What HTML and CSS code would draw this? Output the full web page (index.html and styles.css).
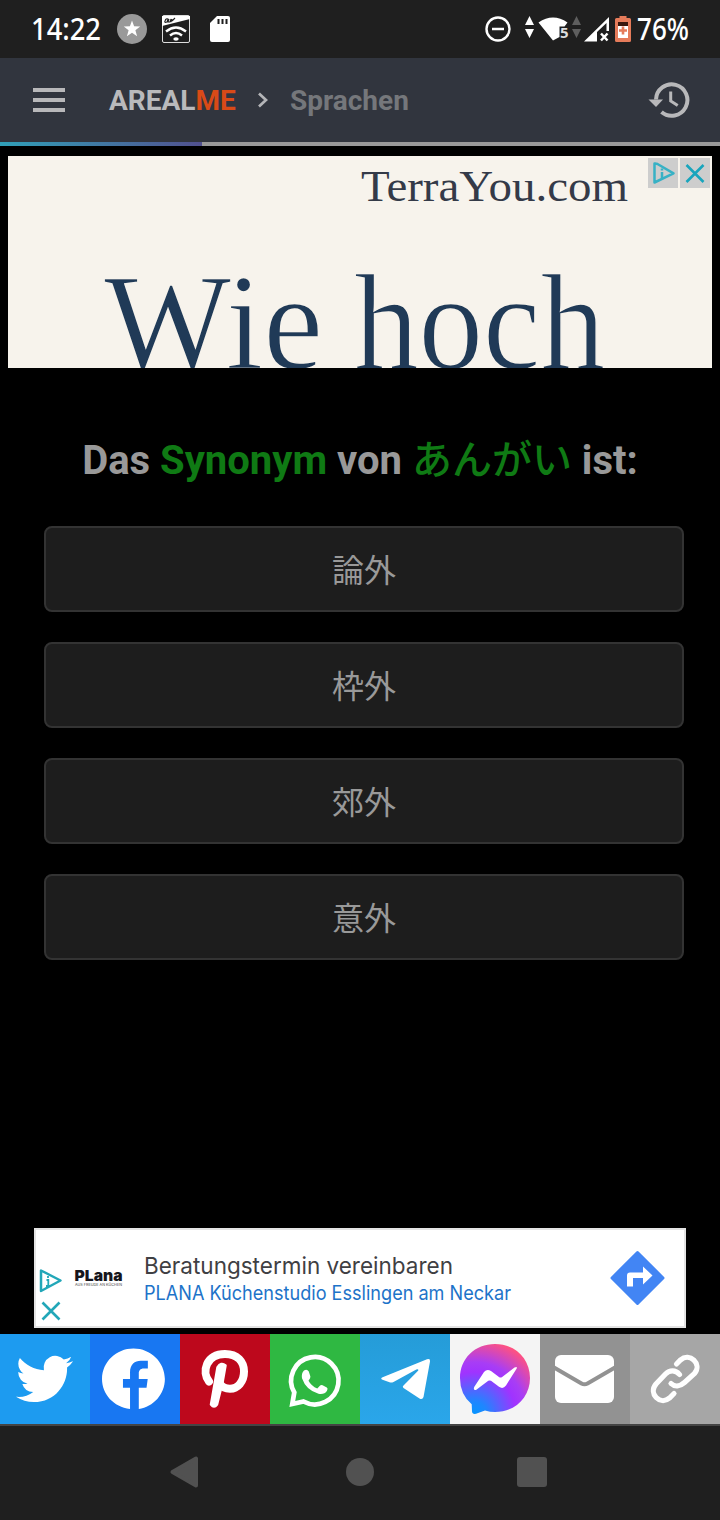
FILE: index.html
```html
<!DOCTYPE html>
<html lang="de">
<head>
<meta charset="utf-8">
<title>AREALME – Sprachen</title>
<link rel="stylesheet" href="styles.css">
</head>
<body>
<div class="status">
  <svg class="clock" width="72" height="58" viewBox="0 0 72 58"><text x="0" y="40" textLength="70" lengthAdjust="spacingAndGlyphs">14:22</text></svg>
  <svg class="status-star" width="30" height="30" viewBox="0 0 30 30"><circle cx="15" cy="15" r="15" fill="#999"/><path d="M15 6.500l2.100 5.800 6.100.2-4.800 3.800 1.700 5.900-5.100-3.400-5.100 3.400 1.700-5.900-4.800-3.800 6.100-.2z" fill="#fff"/></svg>
  <svg class="status-au" width="28" height="28" viewBox="0 0 28 28"><rect x=".5" y=".5" width="27" height="27" rx="1.500" fill="#1f1f1f" stroke="#ddd"/><path d="M0 1h28v3L0 11z" fill="#fff"/><path d="M3 6q1-3 3-2l-1 3q-3 1-2-1M7 4l-1 3h2l1-3M10 4l-1 3M13 3l-3 3" fill="none" stroke="#222" stroke-width="1.100"/><g fill="none" stroke="#fff" stroke-width="2.400"><path d="M4 16.500q10-8 20 0"/><path d="M8 20.500q6-5 12 0"/></g><ellipse cx="14" cy="24" rx="2.700" ry="1.800" fill="#fff"/></svg>
  <svg width="20" height="26" viewBox="0 0 20 26"><path d="M7 0h11q2 0 2 2v22q0 2-2 2H2q-2 0-2-2V7z" fill="#fff"/><path d="M8.500 3v5M12.500 3v5M16.500 3v5" stroke="#1f1f1f" stroke-width="2"/></svg>
  <svg class="status-right" width="206" height="58" viewBox="484 0 206 58">
    <circle cx="498" cy="29" r="11.500" fill="none" stroke="#fff" stroke-width="2.400"/><path d="M492 29h12" stroke="#fff" stroke-width="2.500"/>
    <path d="M529.500 16l4.500 9h-9zM529.500 38l4.500-9h-9z" fill="#fff"/>
    <path d="M538.500 22.500q14.500-10 29 0L564.500 26.500h-5v10.500L553 40.500z" fill="#fff"/>
    <text class="band" x="560" y="38">5</text>
    <path d="M576.500 16l4.500 9h-9zM576.500 38l4.500-9h-9z" fill="#5e5e5e"/>
    <path d="M584 41.500L609 17v14h-2.500v-8L597 32v9.500z" fill="#fff"/><path d="M601 33.500l6.500 7M607.500 33.500l-6.500 7" stroke="#fff" stroke-width="2.500"/>
    <path d="M616.500 18h3v-2h7v2h3q1.500 0 1.500 1.500v21q0 1.500-1.500 1.500h-13q-1.500 0-1.500-1.500v-21q0-1.500 1.500-1.500z" fill="#e57b5a"/><path d="M618 22h10v4h-10z" fill="#38170d"/><path d="M618 26h10v12h-10z" fill="#fff"/><path d="M619 30.500h8M623 26.500v8" stroke="#e57b5a" stroke-width="2.600"/>
    <text x="637" y="40" textLength="52" lengthAdjust="spacingAndGlyphs">76%</text>
  </svg>
</div>
<header class="top">
  <div class="burger"><i></i><i></i><i></i></div>
  <div class="brand">AREAL<span>ME</span></div>
  <svg class="chevron" width="12" height="16" viewBox="0 0 12 16"><path d="M2 1.500L9 8l-7 6.500" fill="none" stroke="#b4b5b8" stroke-width="2.700"/></svg>
  <div class="crumb">Sprachen</div>
  <svg class="history" width="42" height="38" viewBox="0 0 42 38"><path d="M8 18.500A15.700 15.700 0 1 1 13.500 31" fill="none" stroke="#b8b8ba" stroke-width="4"/><path d="M.5 18.500H15L8 26z" fill="#b8b8ba"/><path d="M22.700 10.500v9.500l7 4.500" fill="none" stroke="#b8b8ba" stroke-width="3"/></svg>
</header>
<div class="progress"><div class="bar"></div></div>
<section class="ad-top">
  <svg width="704" height="212" viewBox="8 156 704 212">
    <text class="site" x="361" y="201" textLength="267" lengthAdjust="spacingAndGlyphs">TerraYou.com</text>
    <text class="claim" x="104" y="369" textLength="219" lengthAdjust="spacingAndGlyphs">Wie</text>
    <text class="claim" x="354" y="369" textLength="251" lengthAdjust="spacingAndGlyphs">hoch</text>
    <path d="M648 158h30v30h-30zM680 158h30v30h-30z" fill="#cdcdcd"/>
    <path d="M654.500 163.500v19l19-9.200-16-9.300q-3-1-3 0z" fill="none" stroke="#37b1c5" stroke-width="2.500" stroke-linejoin="round"/><path d="M662 168.500v2M662 172v6" stroke="#37b1c5" stroke-width="2.500"/>
    <path d="M686.500 165l17 17M703.500 165l-17 17" stroke="#18a5bd" stroke-width="2.600"/>
  </svg>
</section>
<main class="quiz">
  <h1 class="question">Das <b>Synonym</b> von <b class="kana">あんがい</b> ist:</h1>
  <div class="answers">
    <button class="answer">論外</button>
    <button class="answer">枠外</button>
    <button class="answer">郊外</button>
    <button class="answer">意外</button>
  </div>
</main>
<section class="ad-bottom">
  <svg width="648" height="96" viewBox="36 1230 648 96">
    <path d="M41 1270.500v20.500l19.500-10.500z" fill="none" stroke="#22a7b8" stroke-width="2.500" stroke-linejoin="round"/><path d="M48 1276v2M46.500 1280h1.800v6M46 1286h4.500" fill="none" stroke="#22a7b8" stroke-width="1.800"/>
    <path d="M42.500 1302.500l17 17M59.500 1302.500l-17 17" stroke="#22a7b8" stroke-width="2.600"/>
    <text class="plana" x="74.500" y="1281" textLength="48" lengthAdjust="spacingAndGlyphs">PLana</text>
    <text class="plana-sub" x="75" y="1286" textLength="47" lengthAdjust="spacingAndGlyphs">AUS FREUDE AN KÜCHEN</text>
    <text class="ad-title" x="144" y="1274" textLength="309" lengthAdjust="spacingAndGlyphs">Beratungstermin vereinbaren</text>
    <text class="ad-link" x="144" y="1300" textLength="367" lengthAdjust="spacingAndGlyphs">PLANA Küchenstudio Esslingen am Neckar</text>
    <path d="M637.500 1252.500l25.500 25.500-25.500 25.500-25.500-25.500z" fill="#4285f4" stroke="#4285f4" stroke-width="3" stroke-linejoin="round"/>
    <path d="M627 1286.500v-11q0-3 3-3h13v-6l9.500 9-9.500 9v-6.500h-10v8.500z" fill="#fff"/>
  </svg>
</section>
<nav class="share">
  <a class="tw"><svg viewBox="0 0 90 90"><path transform="translate(16 16.500) scale(2.370)" fill="#fff" d="M23.953 4.570a10 10 0 01-2.825.775 4.958 4.958 0 002.163-2.723c-.951.555-2.005.959-3.127 1.184a4.920 4.920 0 00-8.384 4.482C7.690 8.095 4.067 6.130 1.640 3.162a4.822 4.822 0 00-.666 2.475c0 1.710.870 3.213 2.188 4.096a4.904 4.904 0 01-2.228-.616v.060a4.923 4.923 0 003.946 4.827 4.996 4.996 0 01-2.212.085 4.936 4.936 0 004.604 3.417 9.867 9.867 0 01-6.102 2.105c-.390 0-.779-.023-1.170-.067a13.995 13.995 0 007.557 2.209c9.053 0 13.998-7.496 13.998-13.985 0-.210 0-.420-.015-.630A9.935 9.935 0 0024 4.590z"/></svg></a>
  <a class="fb"><svg viewBox="0 0 90 90"><path transform="translate(12 14.300) scale(2.620 2.540)" fill="#fff" d="M24 12.073c0-6.627-5.373-12-12-12s-12 5.373-12 12c0 5.990 4.388 10.954 10.700 11.854v-8.385H8v-3.470h2.700V9.430c0-3.007 1.792-4.500 4.100-4.500h2.700v3.020h-1.500c-1.491 0-1.956.925-1.956 1.874v2.250h3.400l-.450 3.470h-2.950v8.385C19.612 23.027 24 18.062 24 12.073z"/></svg></a>
  <a class="pi"><svg viewBox="0 0 90 90" fill="none" stroke="#fff" stroke-linecap="round"><path d="M29 47.500C21.500 38 26 20 45 20C57.500 20 64 27.500 64 37.500C64 48 57.500 54.700 50 54.700C45 54.700 42 53 40 50" stroke-width="8"/><path d="M37.500 33.500q3.500-6 8-2l-3 17-5.500 22q-3 4-6 0z" fill="#fff" stroke-width="2.500" stroke-linejoin="round"/></svg></a>
  <a class="wa"><svg viewBox="0 0 90 90"><path d="M24.300 58.500A23.700 23.700 0 1 1 33.500 67.500L22.300 70z" fill="none" stroke="#fff" stroke-width="4.700"/><path d="M34 36.500q3-2 4.800 1l1.600 5q.3 1.200-1.900 4.200 3 5.500 8.800 7.800l2.800-3q1-1 2.500-.3l4.200 2.200q1.500 1 .2 3.400-2.500 4-8.500 3-12.500-3.600-16.500-15.500-.8-5 2-7.800z" fill="#fff"/></svg></a>
  <a class="te"><svg viewBox="0 0 90 90"><path d="M22 43.500L67 25.300q3.500-1 3 2.200L63.500 63q-1 3-4 1.400L43.500 54q-1.500-1.200 0-2.500L58.300 36.500q.3-2-2-1L33.500 48q-2 1-4 .3l-7-2.500q-2.300-1-.5-2.300z" fill="#fff"/></svg></a>
  <a class="me"><svg viewBox="0 0 90 90"><defs><radialGradient id="msg" gradientUnits="userSpaceOnUse" cx="24" cy="80" r="84"><stop offset="0" stop-color="#0695ff"/><stop offset=".15" stop-color="#1f86ff"/><stop offset=".5" stop-color="#a033ff"/><stop offset=".62" stop-color="#a83df5"/><stop offset=".9" stop-color="#ff5280"/><stop offset="1" stop-color="#ff7061"/></radialGradient></defs><path d="M45 10C65 10 80 24.500 80 44S65 78 45 78q-5 0-10-1.500l-9 3.300q-3.800.7-4-2.500l-.3-7Q10 60.500 10 44C10 24.500 25 10 45 10z" fill="url(#msg)"/><path d="M24.200 53l9.800-15q3-3.500 7-1l8.300 6.200q1.200.8 2.500 0L64.500 33.600q3-1.600 2.200.8L56 51.500q-3 4-7 1.300l-8-6q-1.400-.8-2.700 0L26 56q-3 .5-1.800-3z" fill="#fff"/></svg></a>
  <a class="ma"><svg viewBox="0 0 90 90"><rect x="15" y="21" width="59" height="48" rx="6" fill="#fff"/><path d="M14 33.500L41.500 49.500q3 1.700 6 0L75 33.500" fill="none" stroke="#929292" stroke-width="4"/></svg></a>
  <a class="li"><svg viewBox="0 0 90 90" fill="none" stroke="#fff" stroke-width="5.200" stroke-linecap="round"><path d="M46.500 30l4-4c9-8 22 4 14 13.500L54.500 48.500c-4.500 4-10 4.500-13.500 1"/><path d="M49.500 40.500c-4-5-10-4.500-14-.5L26 50c-8 9.500 4 22 13.500 14l4.500-4.500"/></svg></a>
</nav>
<div class="android">
  <svg width="30" height="34" viewBox="0 0 30 34"><path d="M3.500 17L27 3.500v27z" fill="#515151" stroke="#515151" stroke-width="4" stroke-linejoin="round"/></svg>
  <i class="home"></i><i class="recent"></i>
</div>
</body>
</html>
```
FILE: styles.css
```css
* { box-sizing: border-box; }
body { margin: 0; width: 720px; height: 1520px; overflow: hidden; display: flex; flex-direction: column; background: #000; font-family: Roboto, "Noto Sans CJK JP", sans-serif; }
svg { display: block; flex: none; }
.status { height: 58px; flex: none; background: #1f1f1f; display: flex; align-items: center; padding: 0 30px 0 31px; }
.status svg { overflow: visible; }
.status text { font: 500 31px "Noto Sans", sans-serif; fill: #fff; }
.status .band { font: 700 15px "Noto Sans", sans-serif; fill: #ddd; }
.clock { margin-right: 14px; }
.status-star { margin-right: 15px; }
.status-au { margin-right: 20px; }
.status-right { margin-left: auto; }
.top { height: 84px; flex: none; background: #31353e; display: flex; align-items: center; padding: 0 30px 0 33px; font-size: 28px; font-weight: 700; line-height: 34px; }
.burger { width: 32px; display: flex; flex-direction: column; gap: 6px; margin-right: 44px; }
.burger i { height: 4px; background: #b8b8ba; }
.brand { color: #b9babc; width: 127px; padding-top: 2px; }
.brand span { color: #d94a17; }
.chevron { margin: 0 21px 0 21px; }
.crumb { color: #75777b; padding-top: 2px; }
.history { margin-left: auto; }
.progress { height: 4px; flex: none; background: #999; }
.bar { width: 202px; height: 4px; background: linear-gradient(90deg, #30a0b8, #51508e); }
.ad-top { margin: 10px 8px 0; height: 212px; flex: none; background: #f7f3ec; overflow: hidden; }
.site { font: 45px "Liberation Serif", serif; fill: #343a48; }
.claim { font: 138px "Liberation Serif", serif; fill: #203a57; stroke: #f7f3ec; stroke-width: 1.5px; }
.quiz { padding: 63px 36px 0 44px; flex: 1; }
.question { margin: 0 8px 0 0; height: 60px; line-height: 60px; font-size: 40px; font-weight: 700; color: #999; text-align: center; white-space: nowrap; }
.question b { color: #0f7a14; font-weight: 700; }
.question .kana { font-weight: 500; font-family: "Noto Sans CJK JP", sans-serif; line-height: 1; }
.answers { display: flex; flex-direction: column; gap: 30px; margin-top: 35px; }
.answer { height: 86px; padding: 0 0 2px; border: 2px solid #333; border-radius: 8px; background: #1d1d1d; color: #999; font: 32px "Noto Sans CJK JP", sans-serif; }
.ad-bottom { margin: 0 34px 6px; height: 100px; flex: none; border: 2px solid #e4e4e4; background: #fff; }
.plana { font: 900 15px Inter, sans-serif; fill: #16161c; }
.plana-sub { font: 4px Inter, sans-serif; fill: #444; }
.ad-title { font: 23.500px Inter, sans-serif; fill: #3f4043; }
.ad-link { font: 19.500px Inter, sans-serif; fill: #1d73c9; }
.share { height: 92px; flex: none; display: flex; border-bottom: 2px solid #444; }
.share a { width: 90px; height: 90px; }
.tw { background: #1d9bf0; }
.fb { background: #1877f2; }
.pi { background: #bd081c; }
.wa { background: #2fb842; }
.te { background: linear-gradient(#259cd8, #2aa6ea); }
.me { background: #f4f4f4; }
.ma { background: #929292; }
.li { background: #a6a6a6; }
.android { height: 94px; flex: none; background: #1f1f1f; display: flex; align-items: center; padding: 0 173px 2px 169px; }
.home { width: 28px; height: 28px; margin-left: 147px; border-radius: 50%; background: #515151; }
.recent { width: 30px; height: 30px; margin-left: 143px; border-radius: 3px; background: #515151; }
```
